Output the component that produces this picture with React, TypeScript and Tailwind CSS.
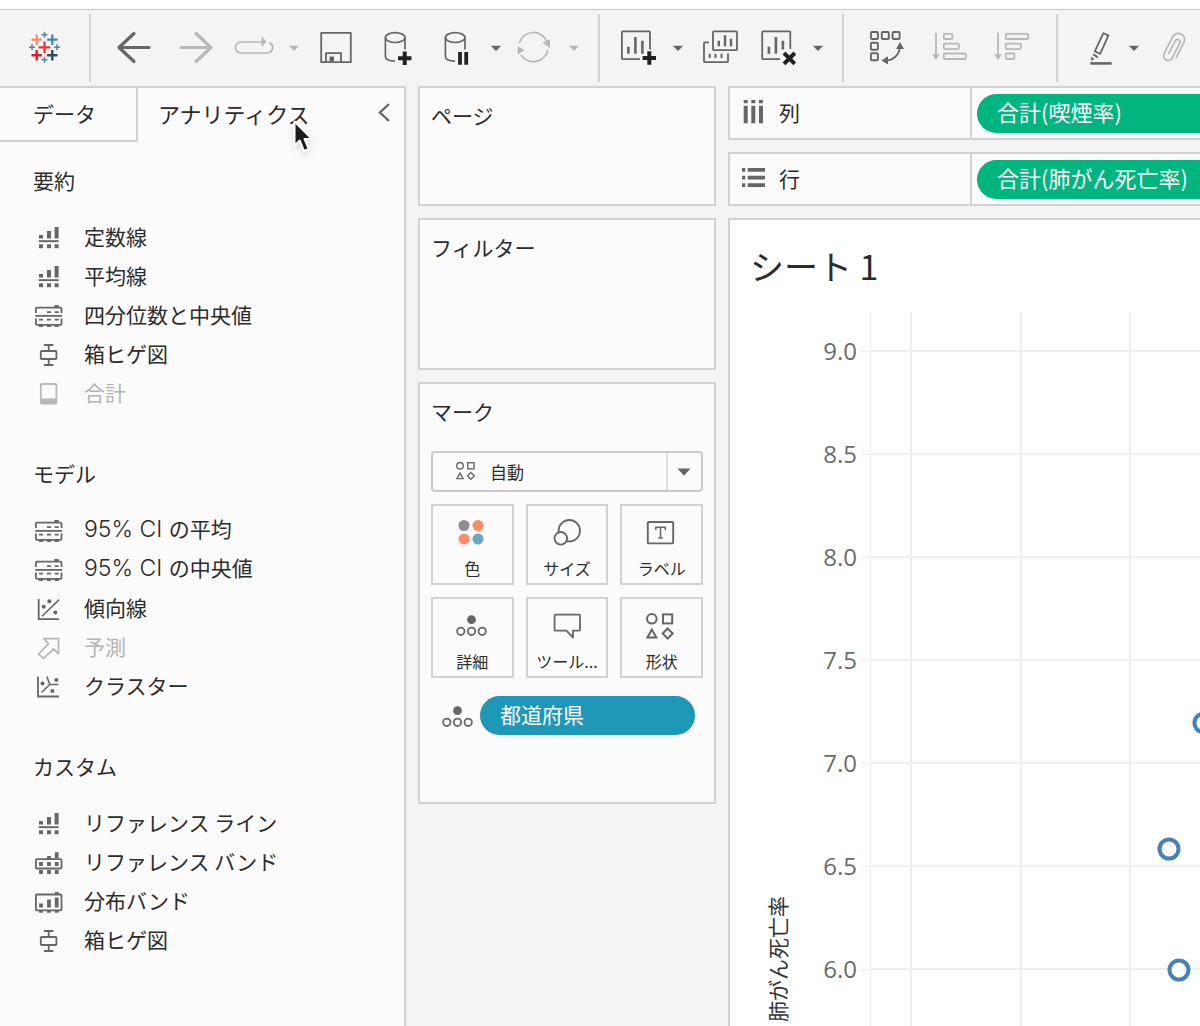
import React, { useState } from 'react';

const INK = '#666666';
const FAINT = '#b8b8b8';

interface IconProps {
  color?: string;
}

/* ---------- toolbar icons ---------- */

const LogoIcon = () => (
  <svg width="36" height="36" viewBox="0 0 36 36" fill="none">
    <path d="M17.5 11.5v11.6M11.7 17.3h11.6" stroke="#e8332e" strokeWidth="2.2" />
    <path d="M9.7 4.5v10.4M4.5 9.7h10.4" stroke="#ff8a66" strokeWidth="2.2" />
    <path d="M25.3 4.5v10.4M20.1 9.7h10.4" stroke="#3a87a8" strokeWidth="2.2" />
    <path d="M9.7 20.1v10.4M4.5 25.3h10.4" stroke="#d91e36" strokeWidth="2.4" />
    <path d="M25.3 20.1v10.4M20.1 25.3h10.4" stroke="#2f4a5c" strokeWidth="2.4" />
    <path d="M17.5 1.7v6M14.5 4.7h6M17.5 26.7v6M14.5 29.7h6M5 14.3v6M2 17.3h6M30 14.3v6M27 17.3h6" stroke="#5585ab" strokeWidth="1.6" />
  </svg>
);

const BackIcon = () => (
  <svg width="36" height="36" viewBox="0 0 36 36" fill="none" stroke={INK} strokeWidth="3.2" strokeLinecap="round" strokeLinejoin="round">
    <path d="M33 17.5H3M18 3.5L3 17.5L18 31.5" />
  </svg>
);

const ForwardIcon = () => (
  <svg width="36" height="36" viewBox="0 0 36 36" fill="none" stroke={FAINT} strokeWidth="3.2" strokeLinecap="round" strokeLinejoin="round">
    <path d="M3 17.5H33M18 3.5L33 17.5L18 31.5" />
  </svg>
);

const ReplayIcon = () => (
  <svg width="40" height="36" viewBox="0 0 40 36" fill="none" stroke={FAINT} strokeWidth="1.7">
    <path d="M28 12H7a5.5 5.5 0 0 0 0 11h26.5a5.6 5.6 0 0 0 2-10.6" />
    <path d="M27.5 6.5v10.5l5-5.2z" fill={FAINT} stroke="none" />
  </svg>
);

const SaveIcon = () => (
  <svg width="36" height="36" viewBox="0 0 36 36" fill="none" stroke={INK} strokeWidth="1.8" strokeLinejoin="round">
    <rect x="3.2" y="2.8" width="29.6" height="29.4" />
    <path d="M8 32V23.2h15V32" />
    <rect x="11.5" y="26.5" width="4.5" height="5" fill={INK} stroke="none" />
  </svg>
);

const CylinderShape = () => (
  <g fill="none" stroke={INK} strokeWidth="1.7">
    <ellipse cx="15.2" cy="7.6" rx="9.8" ry="4.9" />
    <path d="M5.4 7.6V26.5c0 2.6 3.6 4.4 9.6 4.7M25 7.6V19.5" />
  </g>
);

const AddSourceIcon = () => (
  <svg width="36" height="36" viewBox="0 0 36 36">
    <CylinderShape />
    <path d="M24.7 21.5v13.6M18 28.3h13.4" stroke="#222" strokeWidth="4" />
  </svg>
);

const PauseSourceIcon = () => (
  <svg width="36" height="36" viewBox="0 0 36 36">
    <CylinderShape />
    <path d="M20 22v12.8M26.2 22v12.8" stroke="#222" strokeWidth="3.8" />
  </svg>
);

const RefreshIcon = () => (
  <svg width="36" height="36" viewBox="0 0 36 36" fill="none" stroke={FAINT} strokeWidth="1.7">
    <path d="M3.2 13A14.8 14.8 0 0 1 31 11.5M31.8 20A14.8 14.8 0 0 1 5 25" />
    <path d="M26.5 12.8L34 9.3v8.6zM1.7 16.5L8.6 20L1.7 24.4z" fill={FAINT} stroke="none" />
  </svg>
);

const AddSheetIcon = () => (
  <svg width="36" height="36" viewBox="0 0 36 36" fill="none" stroke={INK} strokeWidth="1.8">
    <path d="M30 19.5V2.4a1 1 0 0 0-1-1H2.9a1 1 0 0 0-1 1v25.8a1 1 0 0 0 1 1H20" />
    <path d="M8.4 16.7v7M15.4 7v16.7M22.4 10.8v12.9" strokeWidth="2.6" />
    <path d="M29.3 21.2v13.6M22.6 28h13.4" stroke="#222" strokeWidth="4" />
  </svg>
);

const DuplicateSheetIcon = () => (
  <svg width="36" height="36" viewBox="0 0 36 36" fill="none" stroke={INK} strokeWidth="1.8">
    <rect x="11" y="1.4" width="24" height="18.8" rx="1" />
    <path d="M7 12.4H3a1 1 0 0 0-1 1v17.8a1 1 0 0 0 1 1h22a1 1 0 0 0 1-1V23.5" />
    <path d="M16.8 10.7v5.5M23 5.3v10.9M29 8.7v7.5" strokeWidth="2.4" />
    <path d="M7.7 23.7v4.4M13.5 23.7v4.4M19.5 23.7v4.4" strokeWidth="2" />
  </svg>
);

const ClearSheetIcon = () => (
  <svg width="36" height="36" viewBox="0 0 36 36" fill="none" stroke={INK} strokeWidth="1.8">
    <path d="M30.3 19V2.4a1 1 0 0 0-1-1H3.2a1 1 0 0 0-1 1v25.8a1 1 0 0 0 1 1H20" />
    <path d="M8.9 16.7v7M15.9 7v16.7M22.9 10.8v8.6" strokeWidth="2.6" />
    <path d="M24 23l10.8 10.8M34.8 23L24 33.8" stroke="#222" strokeWidth="4" />
  </svg>
);

const SwapAxesIcon = () => (
  <svg width="36" height="36" viewBox="0 0 36 36" fill="none" stroke={INK} strokeWidth="1.9">
    <rect x="2.9" y="2" width="7" height="7" rx="1" />
    <rect x="13.8" y="2" width="7" height="7" rx="1" />
    <rect x="24.6" y="2" width="7" height="7" rx="1" />
    <rect x="2.9" y="12.8" width="7" height="7" rx="1" />
    <rect x="2.9" y="23.3" width="7" height="7" rx="1" />
    <path d="M18.5 30.5C25.5 30 31 25 31.9 17.5" />
    <path d="M32 12l4 7h-8zM13.4 30.4l6.6-4.2v8.4z" fill={INK} stroke="none" />
  </svg>
);

const SortAscIcon = () => (
  <svg width="36" height="36" viewBox="0 0 36 36" fill="none" stroke={FAINT} strokeWidth="1.8">
    <path d="M4 2.7V25" />
    <path d="M.2 24.2h7.6L4 30z" fill={FAINT} stroke="none" />
    <rect x="11.8" y="3.8" width="8.6" height="5.2" rx="1" />
    <rect x="11.8" y="13.6" width="15" height="5.5" rx="1" />
    <rect x="11.8" y="23.5" width="22" height="5.5" rx="1" />
  </svg>
);

const SortDescIcon = () => (
  <svg width="36" height="36" viewBox="0 0 36 36" fill="none" stroke={FAINT} strokeWidth="1.8">
    <path d="M4 2.7V25" />
    <path d="M.2 24.2h7.6L4 30z" fill={FAINT} stroke="none" />
    <rect x="11.8" y="3.8" width="22.4" height="5.2" rx="1" />
    <rect x="11.8" y="13.6" width="15" height="5.5" rx="1" />
    <rect x="11.8" y="23.5" width="8.6" height="5.5" rx="1" />
  </svg>
);

const HighlightIcon = () => (
  <svg width="36" height="36" viewBox="0 0 36 36" fill="none" stroke={INK} strokeWidth="1.8" strokeLinejoin="round">
    <path d="M21.4 3.2l5 2.2L18.2 23.8l-5.4-2.4z" />
    <path d="M11.2 24.2l4.6 3.2" strokeWidth="2" />
    <path d="M9 26.4l3.4 2.6-3 2z" fill={INK} stroke="none" />
    <path d="M8.3 33.4h21.4" strokeWidth="2.6" />
  </svg>
);

const ClipIcon = () => (
  <svg width="36" height="36" viewBox="0 0 36 36" fill="none" stroke={FAINT} strokeWidth="1.7" strokeLinecap="round">
    <path transform="translate(18 17.5) rotate(27)" d="M6.6 7.5V-9A6.3 6.3 0 0 0-6-9V10a4.6 4.6 0 0 0 9.2 0V-6.5a2.6 2.6 0 0 0-5.2 0V7.5" />
  </svg>
);

const Caret: React.FC<IconProps> = ({ color = INK }) => (
  <svg width="12" height="36" viewBox="0 0 12 36">
    <path d="M.8 15.7h10.4L6 21z" fill={color} />
  </svg>
);

/* ---------- analytics pane icons ---------- */

const LineIcon: React.FC<IconProps> = () => (
  <g fill={INK}>
    <rect x="6" y="9" width="4" height="3.5" />
    <rect x="14" y="5" width="4" height="7.5" />
    <rect x="21.6" y="1" width="4" height="11.5" />
    <rect x="5.7" y="14.2" width="20" height="1.9" />
    <rect x="6" y="18.3" width="4" height="3.9" />
    <rect x="14" y="18.3" width="4" height="3.9" />
    <rect x="21.6" y="18.3" width="4" height="3.9" />
  </g>
);

const QuartileIcon: React.FC<IconProps> = () => (
  <g fill="none" stroke={INK} strokeWidth="1.8">
    <path d="M2.9 9V4.7a1 1 0 0 1 1-1h23.6a1 1 0 0 1 1 1V9M2.2 11.9h27M2.9 14.6v5.2a1 1 0 0 0 1 1h23.6a1 1 0 0 0 1-1v-5.2" />
    <path d="M14 8.2h4M21.7 8.2h4M6 15.7h4M14 15.7h4M21.7 15.7h4M6 22h4M14 22h4M21.7 22h4M21.4 2h4.4" />
  </g>
);

const BoxPlotIcon: React.FC<IconProps> = () => (
  <g fill="none" stroke={INK} strokeWidth="1.8">
    <rect x="7.8" y="8" width="15.6" height="8" rx="1" />
    <path d="M11 2h9.4M15.7 2v6M15.7 16v6M11 22h9.4" />
  </g>
);

const TotalIcon: React.FC<IconProps> = () => (
  <g fill="none" stroke={FAINT} strokeWidth="1.8">
    <rect x="7.8" y="2" width="15.6" height="19.6" rx="1" />
    <rect x="7.8" y="16.5" width="15.6" height="5" fill={FAINT} stroke="none" />
  </g>
);

const TrendIcon: React.FC<IconProps> = () => (
  <g fill="none" stroke={INK} strokeWidth="1.8">
    <path d="M5.7 2v20.2H26" />
    <path d="M9 19.3L26.2 2.6" strokeWidth="1.6" />
    <g fill={INK} stroke="none">
      <circle cx="16.3" cy="4.2" r="2" />
      <circle cx="10.7" cy="9.8" r="2" />
      <circle cx="22.3" cy="15.6" r="2" />
    </g>
  </g>
);

const ForecastIcon: React.FC<IconProps> = () => (
  <path d="M10.7 2.7H25.5V17.7L20.6 13L10.6 22.4L5.6 18L15.5 7.6z" fill="none" stroke={FAINT} strokeWidth="1.8" strokeLinejoin="round" />
);

const ClusterIcon: React.FC<IconProps> = () => (
  <g fill="none" stroke={INK} strokeWidth="1.8">
    <path d="M5 1.5v20H26" />
    <path d="M13.8 1.5l3 8H25.5M16.8 9.5l-8.3 8" strokeWidth="1.6" />
    <g fill={INK} stroke="none">
      <circle cx="9.5" cy="8.5" r="2" />
      <circle cx="23.3" cy="5" r="2" />
      <circle cx="19.4" cy="16" r="2" />
    </g>
  </g>
);

const BandIcon: React.FC<IconProps> = () => (
  <g fill="none" stroke={INK} strokeWidth="1.8">
    <rect x="2.9" y="8.2" width="25.6" height="9.3" rx="1" />
    <path d="M8 11v4M16 11v4M23.7 11v4M8 19v4M16 19v4M23.7 19v4M23.7 1.3v6M16 5v3" strokeWidth="3.8" />
  </g>
);

const DistributionIcon: React.FC<IconProps> = () => (
  <g fill="none" stroke={INK} strokeWidth="1.8">
    <rect x="2.9" y="4.5" width="25.6" height="15.8" rx="1" />
    <path d="M8 13.5v4M16 9.6v7.9M23.7 7.6v9.9M8 20.5v2.3M16 20.5v2.3M23.7 20.5v2.3M23.7 2v2.5" strokeWidth="3.8" />
  </g>
);

/* ---------- marks card icons ---------- */

const ColorMark = () => (
  <svg width="32" height="32" viewBox="0 0 32 32">
    <circle cx="8" cy="9.5" r="5.5" fill="#8a8d91" />
    <circle cx="22" cy="9.5" r="5.5" fill="#ff8c68" />
    <circle cx="8" cy="23" r="5.5" fill="#ff8c68" />
    <circle cx="22" cy="23" r="5.5" fill="#6fa6c4" />
  </svg>
);

const SizeMark = () => (
  <svg width="32" height="32" viewBox="0 0 32 32" fill="#fbfbfb" stroke={INK} strokeWidth="1.8">
    <circle cx="18.3" cy="14.7" r="10.7" />
    <circle cx="9.8" cy="22.3" r="6.3" />
  </svg>
);

const LabelMark = () => (
  <svg width="32" height="32" viewBox="1 0 32 32">
    <rect x="2.8" y="6" width="25.4" height="21.4" rx="1" fill="none" stroke={INK} strokeWidth="1.9" />
    <path d="M10.8 14V11.2h9.4V14M15.5 11.2V22M13.2 22h4.6" fill="none" stroke={INK} strokeWidth="1.5" />
  </svg>
);

const DetailMark = () => (
  <svg width="32" height="32" viewBox="0 0 32 32" fill="none" stroke={INK} strokeWidth="1.8">
    <circle cx="15.5" cy="10.7" r="4.4" fill={INK} stroke="none" />
    <circle cx="4.8" cy="22.3" r="3.7" />
    <circle cx="15.5" cy="22.3" r="3.7" />
    <circle cx="26.2" cy="22.3" r="3.7" />
  </svg>
);

const TooltipMark = () => (
  <svg width="32" height="32" viewBox="0 0 32 32" fill="none" stroke={INK} strokeWidth="1.8" strokeLinejoin="round">
    <path d="M4.6 5.7h23.4a1 1 0 0 1 1 1v14a1 1 0 0 1-1 1H22v6.8l-6.6-6.8H4.6a1 1 0 0 1-1-1v-14a1 1 0 0 1 1-1z" />
  </svg>
);

const ShapeMark: React.FC<{ size?: number }> = ({ size = 32 }) => (
  <svg width={size} height={size} viewBox="1 0 32 32" fill="none" stroke={INK} strokeWidth="2">
    <circle cx="6.8" cy="9.8" r="4.8" />
    <rect x="18" y="5.4" width="9.2" height="9" />
    <path d="M6.8 20.5L2.4 28.6h9zM22.7 19.5l5 5-5 5-5-5z" />
  </svg>
);

/* ---------- data ---------- */

interface PaneItem {
  label: string;
  latin?: string;
  Icon: React.FC<IconProps>;
  disabled?: boolean;
}

const sections: { title: string; items: PaneItem[] }[] = [
  {
    title: '要約',
    items: [
      { label: '定数線', Icon: LineIcon },
      { label: '平均線', Icon: LineIcon },
      { label: '四分位数と中央値', Icon: QuartileIcon },
      { label: '箱ヒゲ図', Icon: BoxPlotIcon },
      { label: '合計', Icon: TotalIcon, disabled: true },
    ],
  },
  {
    title: 'モデル',
    items: [
      { latin: '95% CI', label: 'の平均', Icon: QuartileIcon },
      { latin: '95% CI', label: 'の中央値', Icon: QuartileIcon },
      { label: '傾向線', Icon: TrendIcon },
      { label: '予測', Icon: ForecastIcon, disabled: true },
      { label: 'クラスター', Icon: ClusterIcon },
    ],
  },
  {
    title: 'カスタム',
    items: [
      { label: 'リファレンス ライン', Icon: LineIcon },
      { label: 'リファレンス バンド', Icon: BandIcon },
      { label: '分布バンド', Icon: DistributionIcon },
      { label: '箱ヒゲ図', Icon: BoxPlotIcon },
    ],
  },
];

const marks = [
  { label: '色', Icon: ColorMark },
  { label: 'サイズ', Icon: SizeMark },
  { label: 'ラベル', Icon: LabelMark },
  { label: '詳細', Icon: DetailMark },
  { label: 'ツール...', Icon: TooltipMark },
  { label: '形状', Icon: ShapeMark },
];

const yTicks = [9.0, 8.5, 8.0, 7.5, 7.0, 6.5, 6.0];
const xLines = [181, 291, 400];
const points = [
  { x: 474, y: 411 },
  { x: 439, y: 537 },
  { x: 449, y: 658 },
];

/* ---------- parts ---------- */

const ToolButton: React.FC<{ label: string; className: string; disabled?: boolean; children: React.ReactNode }> = ({ label, className, disabled, children }) => (
  <button type="button" aria-label={label} disabled={disabled} className={`shrink-0 ${className}`}>
    {children}
  </button>
);

const Separator: React.FC<{ className?: string }> = ({ className = '' }) => (
  <div className={`h-[68px] w-0.5 shrink-0 bg-[#d2d2d2] ${className}`} />
);

const Toolbar = () => (
  <div role="toolbar" className="flex h-[77px] items-center overflow-hidden border-t border-[#c9c9c9]">
    <ToolButton label="スタート ページ" className="ml-[27px]"><LogoIcon /></ToolButton>
    <Separator className="ml-[26px]" />
    <ToolButton label="元に戻す" className="ml-[25px]"><BackIcon /></ToolButton>
    <ToolButton label="やり直し" className="ml-[26px]" disabled><ForwardIcon /></ToolButton>
    <ToolButton label="再生" className="ml-5" disabled><ReplayIcon /></ToolButton>
    <ToolButton label="再生オプション" className="ml-3.5" disabled><Caret color={FAINT} /></ToolButton>
    <ToolButton label="保存" className="ml-[18px]"><SaveIcon /></ToolButton>
    <ToolButton label="新しいデータ ソース" className="ml-[26px]"><AddSourceIcon /></ToolButton>
    <ToolButton label="自動更新の一時停止" className="ml-6"><PauseSourceIcon /></ToolButton>
    <ToolButton label="自動更新オプション" className="ml-3.5"><Caret /></ToolButton>
    <ToolButton label="更新" className="ml-3.5" disabled><RefreshIcon /></ToolButton>
    <ToolButton label="更新オプション" className="ml-4" disabled><Caret color={FAINT} /></ToolButton>
    <Separator className="ml-[18px]" />
    <ToolButton label="新しいワークシート" className="ml-5"><AddSheetIcon /></ToolButton>
    <ToolButton label="新規オプション" className="ml-4"><Caret /></ToolButton>
    <ToolButton label="複製" className="ml-[18px]"><DuplicateSheetIcon /></ToolButton>
    <ToolButton label="シートのクリア" className="ml-[22px]"><ClearSheetIcon /></ToolButton>
    <ToolButton label="クリア オプション" className="ml-4"><Caret /></ToolButton>
    <Separator className="ml-[18px]" />
    <ToolButton label="行と列の交換" className="ml-6"><SwapAxesIcon /></ToolButton>
    <ToolButton label="昇順で並べ替え" className="ml-7" disabled><SortAscIcon /></ToolButton>
    <ToolButton label="降順で並べ替え" className="ml-[26px]" disabled><SortDescIcon /></ToolButton>
    <Separator className="ml-[26px]" />
    <ToolButton label="ハイライト" className="ml-6"><HighlightIcon /></ToolButton>
    <ToolButton label="ハイライト オプション" className="ml-2.5"><Caret /></ToolButton>
    <ToolButton label="グループ" className="ml-4" disabled><ClipIcon /></ToolButton>
  </div>
);

const Cursor = () => (
  <svg className="pointer-events-none absolute left-[152px] top-[30px] drop-shadow-md" width="28" height="38" viewBox="0 0 28 38">
    <path d="M4.5 3.5V27.5L9.8 22.6L14 33L18.8 31L14.6 21H22z" fill="#1c1c1c" stroke="#fff" strokeWidth="2" strokeLinejoin="round" />
  </svg>
);

const SidePane = () => {
  const [tab, setTab] = useState('analytics');

  return (
    <aside className="w-[406px] shrink-0 border-r-2 border-t-2 border-[#d2d2d2] bg-[#fbfbfb]">
      <div role="tablist" className="flex h-[54px]">
        <button role="tab" aria-selected={tab === 'data'} onClick={() => setTab('data')} className="w-[138px] shrink-0 border-b-2 border-r-2 border-[#d2d2d2] pb-0.5 pl-[33px] text-left">
          データ
        </button>
        <button role="tab" aria-selected={tab === 'analytics'} onClick={() => setTab('analytics')} className="relative flex-1 pb-1 pl-5 text-left text-[22px]">
          アナリティクス
          <Cursor />
        </button>
        <button aria-label="ペインを折りたたむ" className="pb-1 pr-3">
          <svg width="16" height="24" viewBox="0 0 16 24" fill="none" stroke={INK} strokeWidth="2.4">
            <path d="M13 3L4 11.5L13 20" />
          </svg>
        </button>
      </div>

      <div className="flex flex-col gap-[42px] pb-10 pl-[33px] pt-5">
        {sections.map((section) => (
          <section key={section.title}>
            <h2 className="mb-5 h-9 leading-9">{section.title}</h2>
            <ul>
              {section.items.map(({ label, latin, Icon, disabled }) => (
                <li key={(latin ?? '') + label}>
                  <button disabled={disabled} className="flex h-[39px] items-center gap-[21px] text-left disabled:text-[#b3b3b3]">
                    <svg width="30" height="24" viewBox="0 0 30 24" aria-hidden="true"><Icon /></svg>
                    <span className="pb-1">
                      {latin && <span className="font-['Inter'] text-[23px] font-light">{latin} </span>}
                      {label}
                    </span>
                  </button>
                </li>
              ))}
            </ul>
          </section>
        ))}
      </div>
    </aside>
  );
};

const Card: React.FC<{ title: string; className: string; children?: React.ReactNode }> = ({ title, className, children }) => (
  <section className={`border-2 border-[#d2d2d2] bg-[#fbfbfb] px-[11px] ${className}`}>
    <h2 className="flex h-14 items-center pb-0.5">{title}</h2>
    {children}
  </section>
);

const MarksCard = () => (
  <Card title="マーク" className="min-h-[422px]">
    <div className="relative mt-[11px]">
      <select aria-label="マーク タイプ" className="h-[41px] w-full appearance-none rounded-sm border-2 border-[#c9c9c9] bg-transparent pl-[57px] text-[17px]">
        <option>自動</option>
      </select>
      <span className="pointer-events-none absolute left-[25px] top-2"><ShapeMark size={22} /></span>
      <span className="pointer-events-none absolute inset-y-0.5 right-0 flex w-[37px] items-center justify-center border-l-2 border-[#dedede] pr-1">
        <svg width="14" height="8" viewBox="0 0 14 8"><path d="M.5.5h13L7 7.8z" fill={INK} /></svg>
      </span>
    </div>

    <div className="mt-3 grid grid-cols-3 gap-3">
      {marks.map(({ label, Icon }) => (
        <button key={label} className="flex h-[81px] flex-col items-center border-2 border-[#d2d2d2] pt-2.5 text-base leading-6">
          <Icon />
          <span className="mt-2">{label}</span>
        </button>
      ))}
    </div>

    <div className="mt-[18px] flex items-center pl-[11px] pr-2">
      <DetailMark />
      <button className="ml-1.5 h-[39px] flex-1 rounded-full bg-[#1f98b8] pb-1 pl-5 text-left text-white">都道府県</button>
    </div>
  </Card>
);

const Shelf: React.FC<{ title: string; pill: string; icon: React.ReactNode }> = ({ title, pill, icon }) => (
  <div className="flex h-[54px] shrink-0 border-2 border-r-0 border-[#d2d2d2] bg-[#fbfbfb]">
    <div className="flex w-[242px] shrink-0 items-center gap-3 border-r-2 border-[#d2d2d2] pl-3">
      {icon}
      <span className="pb-0.5">{title}</span>
    </div>
    <div className="flex flex-1 items-center pl-[5px]">
      <button className="h-[39px] flex-1 whitespace-nowrap rounded-l-full bg-[#00b57e] pb-1 pl-5 text-left text-[22px] text-white">{pill}</button>
    </div>
  </div>
);

const Sheet = () => (
  <section className="flex flex-1 flex-col border-l-2 border-t-2 border-[#d2d2d2] bg-white">
    <h1 className="flex h-[92px] items-center pl-5 text-[34px]">シート 1</h1>
    <svg className="min-h-[700px] w-full flex-1" role="img" aria-label="肺がん死亡率">
      <g fill="#efefef">
        <rect x="140" y="0" width="1" height="100%" />
        {xLines.map((x) => (
          <rect key={x} x={x - 1} y="0" width="2" height="100%" />
        ))}
        {yTicks.map((tick, i) => (
          <g key={tick}>
            <rect x="130" y={39 + i * 103} width="10" height="1" />
            <rect x="140" y={38 + i * 103} width="100%" height="2" />
          </g>
        ))}
      </g>
      <g className="font-['Open_Sans'] text-[24px]" fill="#6b6b6b" textAnchor="end">
        {yTicks.map((tick, i) => (
          <text key={tick} x="127" y={48 + i * 103}>{tick.toFixed(1)}</text>
        ))}
      </g>
      <text transform="translate(56 710) rotate(-90)" fill="#333">肺がん死亡率</text>
      <g fill="#fff" stroke="#4683b3" strokeWidth="4">
        {points.map((p) => (
          <circle key={p.y} cx={p.x} cy={p.y} r="9.5" />
        ))}
      </g>
    </svg>
  </section>
);

const App: React.FC = () => {
  return (
    <div className="flex min-h-screen flex-col bg-[#f4f4f4] bg-[linear-gradient(#fff_9px,transparent_9px)] pt-[9px] font-['Noto_Sans_CJK_JP','Noto_Sans',sans-serif] text-[21px] leading-7 text-[#2b2b2b]">
      <Toolbar />
      <main className="flex flex-1 gap-3">
        <SidePane />

        <div className="flex w-[298px] shrink-0 flex-col gap-3">
          <Card title="ページ" className="h-[120px]" />
          <Card title="フィルター" className="h-[152px]" />
          <MarksCard />
        </div>

        <div className="flex min-w-0 flex-1 flex-col gap-3 overflow-hidden">
          <Shelf
            title="列"
            pill="合計(喫煙率)"
            icon={
              <svg width="25" height="26" viewBox="0 0 25 26" fill={INK}>
                <path d="M1.7 0h4v3.3h-4zM9.3 0h4v3.3h-4zM17 0h4v3.3h-4zM1.7 5.7h4v17.6h-4zM9.3 5.7h4v17.6h-4zM17 5.7h4v17.6h-4z" />
              </svg>
            }
          />
          <Shelf
            title="行"
            pill="合計(肺がん死亡率)"
            icon={
              <svg width="25" height="26" viewBox="0 0 25 26" fill={INK}>
                <path d="M0 2h3.3v3.7H0zM0 9.8h3.3v3.7H0zM0 17.3h3.3v3.7H0zM5.7 2H23v3.7H5.7zM5.7 9.8H23v3.7H5.7zM5.7 17.3H23v3.7H5.7z" />
              </svg>
            }
          />
          <Sheet />
        </div>
      </main>
    </div>
  );
};

export default App;
